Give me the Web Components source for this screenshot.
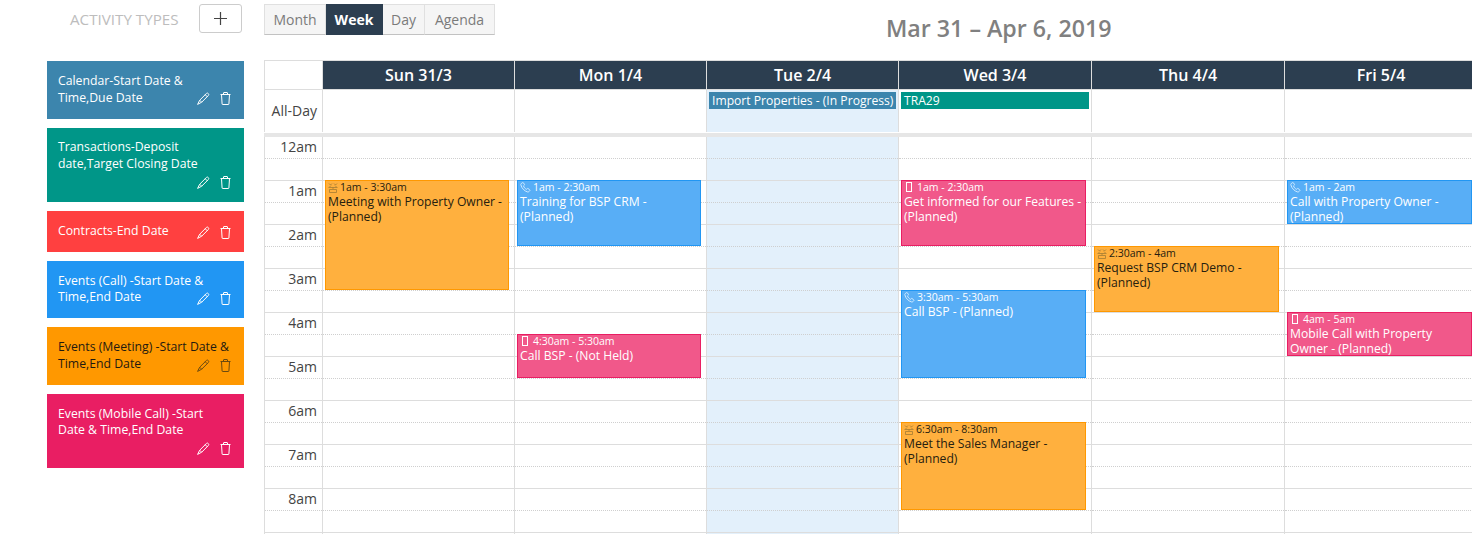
<!DOCTYPE html>
<html><head><meta charset="utf-8"><title>Calendar</title>
<style>
html,body{margin:0;padding:0;height:534px;width:1472px;overflow:hidden;background:#fff;font-family:"Open Sans",sans-serif}
crm-shell{width:1472px;height:534px}
</style></head><body>
<crm-shell>
  <activity-sidebar slot="side">
    <activity-card color="#3c85ad">Calendar-Start Date &amp; Time,Due Date</activity-card>
    <activity-card color="#009688">Transactions-Deposit date,Target Closing Date</activity-card>
    <activity-card color="#ff4040">Contracts-End Date</activity-card>
    <activity-card color="#2196f3">Events (Call) -Start Date &amp; Time,End Date</activity-card>
    <activity-card color="#ff9800" ink="#1f1a10" tool="#6b4a10">Events (Meeting) -Start Date &amp; Time,End Date</activity-card>
    <activity-card color="#e91e63" below>Events (Mobile Call) -Start Date &amp; Time,End Date</activity-card>
  </activity-sidebar>
  <cal-toolbar slot="top"></cal-toolbar>
  <week-calendar slot="main">
    <all-day-event slot="allday2" color="#3c85ad">Import Properties - (In Progress)</all-day-event>
    <all-day-event slot="allday3" color="#009688">TRA29</all-day-event>
    <cal-event slot="day0" kind="meeting" start="1" hours="2.5" time="1am - 3:30am">Meeting with Property Owner - (Planned)</cal-event>
    <cal-event slot="day1" kind="call" start="1" hours="1.5" time="1am - 2:30am">Training for BSP CRM - (Planned)</cal-event>
    <cal-event slot="day1" kind="mobile" start="4.5" hours="1" time="4:30am - 5:30am">Call BSP - (Not Held)</cal-event>
    <cal-event slot="day3" kind="mobile" start="1" hours="1.5" time="1am - 2:30am">Get informed for our Features - (Planned)</cal-event>
    <cal-event slot="day3" kind="call" start="3.5" hours="2" time="3:30am - 5:30am">Call BSP - (Planned)</cal-event>
    <cal-event slot="day3" kind="meeting" start="6.5" hours="2" time="6:30am - 8:30am">Meet the Sales Manager - (Planned)</cal-event>
    <cal-event slot="day4" kind="meeting" start="2.5" hours="1.5" time="2:30am - 4am">Request BSP CRM Demo - (Planned)</cal-event>
    <cal-event slot="day5" kind="call" start="1" hours="1" time="1am - 2am">Call with Property Owner - (Planned)</cal-event>
    <cal-event slot="day5" kind="mobile" start="4" hours="1" time="4am - 5am">Mobile Call with Property Owner - (Planned)</cal-event>
  </week-calendar>
</crm-shell>
<script>
const DAYS=[['Sun 31/3',192],['Mon 1/4',192],['Tue 2/4',192],['Wed 3/4',193],['Thu 4/4',193],['Fri 5/4',193]];
const COLS='59px '+DAYS.map(d=>d[1]+'px').join(' ');
const HOURS=['12am','1am','2am','3am','4am','5am','6am','7am','8am',''];
const LINE='#dddddd';

customElements.define('crm-shell',class extends HTMLElement{constructor(){super();this.attachShadow({mode:'open'}).innerHTML=`
<style>
:host{display:grid;grid-template-columns:264px 1fr;grid-template-rows:60px 1fr;overflow:hidden}
.side{grid-row:1/3;grid-column:1}
.top{grid-row:1;grid-column:2;min-width:0}
.main{grid-row:2;grid-column:2;min-width:0;overflow:hidden}
</style>
<div class="side"><slot name="side"></slot></div>
<div class="top"><slot name="top"></slot></div>
<div class="main"><slot name="main"></slot></div>`}});

customElements.define('activity-sidebar',class extends HTMLElement{constructor(){super();this.attachShadow({mode:'open'}).innerHTML=`
<style>
:host{display:block;padding-left:47px;width:197px}
.head{height:61px;box-sizing:border-box;display:flex;align-items:flex-start;padding-top:4px}
.title{margin-left:23px;width:129px;font-size:15.2px;line-height:30px;color:#bdbdbd;white-space:nowrap}
button{width:43px;height:29px;padding:0;background:#fff;border:1px solid #cccccc;border-radius:3px;display:flex;align-items:center;justify-content:center}
.list{display:flex;flex-direction:column;gap:9px}
svg{display:block}
</style>
<div class="head"><span class="title">ACTIVITY TYPES</span>
<button aria-label="Add"><svg width="13" height="13" viewBox="0 0 13 13"><path d="M6.5 0v13M0 6.5h13" stroke="#444" stroke-width="1.2"/></svg></button></div>
<div class="list"><slot></slot></div>`}});

customElements.define('activity-card',class extends HTMLElement{constructor(){super();
const c=this.getAttribute('color'),ink=this.getAttribute('ink')||'#fff',tool=this.getAttribute('tool')||ink,below=this.hasAttribute('below');
this.attachShadow({mode:'open'}).innerHTML=`
<style>
:host{display:block;background:${c};color:${ink};font-size:12.25px;line-height:16.8px;padding:11.8px 12px 12.2px 11px;width:174px;box-sizing:content-box}
.tools{float:right;${below?'clear:both;margin-top:16.8px;':''}display:flex;gap:10px;align-items:center;height:16.8px;padding:2px 1px 0 0;box-sizing:border-box;color:${tool}}
:host::after{content:"";display:block;clear:both}
svg{display:block;fill:none;stroke:currentColor;stroke-width:1}
</style>
<slot></slot><span class="tools">
<svg width="13" height="13" viewBox="0 0 13 13"><path d="M2.700 8.200 9.300 1.600c.7-.7 1.400-.7 2 0 .6.6.6 1.300 0 2L4.700 10.200.6 12.400ZM8.200 2.700l2.100 2.100M2.700 8.200l2 2"/></svg>
<svg width="11" height="13" viewBox="0 0 11 13"><path d="M.5 2.500h10M1.500 2.500l.6 9.500c0 .3.200.5.500.5h5.800c.3 0 .5-.2.5-.5l.6-9.500M3.500 2.500V1c0-.3.200-.5.500-.5h3c.3 0 .5.200.5.500v1.500"/></svg>
</span>`}});

customElements.define('cal-toolbar',class extends HTMLElement{constructor(){super();this.attachShadow({mode:'open'}).innerHTML=`
<style>
:host{display:flex;align-items:flex-start;height:60px;box-sizing:border-box;padding-top:4px;width:1208px}
.group{display:flex;flex:none}
.b{box-sizing:border-box;height:31px;font-size:14px;line-height:29px;text-align:center;color:#7b7b7b;background:#f5f5f5;border:1px solid #e0e0e0;border-bottom:1px solid #c2c2c2;border-left-width:0}
.b:first-child{border-left-width:1px}
.on{background:#2c3e50;color:#fff;font-weight:700;border-color:#2c3e50}
h2{margin:8px 0 0 391px;font-size:23.2px;line-height:32px;font-weight:600;color:#808080;white-space:nowrap}
</style>
<div class="group"><div class="b" style="width:62px">Month</div><div class="b on" style="width:57px">Week</div><div class="b" style="width:42px">Day</div><div class="b" style="width:70px">Agenda</div></div>
<h2>Mar 31 – Apr 6, 2019</h2>`}});

customElements.define('all-day-event',class extends HTMLElement{constructor(){super();
this.attachShadow({mode:'open'}).innerHTML=`
<style>:host{display:block;background:${this.getAttribute('color')};color:#fff;font-size:12.15px;line-height:17px;height:17px;padding:0 3px;white-space:nowrap;overflow:hidden}</style><slot></slot>`}});

const ICONS={
 call:'<svg width="11" height="11" viewBox="0 0 11 11" style="margin-right:-1px"><path d="M1.200 1.600 2.600.6c.3-.2.6-.1.8.2l1 1.600c.2.3.1.6-.1.8l-.8.7c.4 1.300 1.400 2.600 3 3.400l.8-.7c.3-.2.6-.2.8 0l1.600 1.200c.3.2.3.6.1.8l-1 1.100c-.3.3-.7.4-1.100.3C4.300 9 1.600 6.300.8 2.700c-.1-.4.1-.8.4-1.100Z" fill="none" stroke="currentColor" stroke-width=".9"/></svg>',
 mobile:'<svg width="6" height="10" viewBox="0 0 6 10" style="margin:0 2px 2px 2px"><rect x=".5" y=".5" width="5" height="9" fill="none" stroke="currentColor"/></svg>',
 meeting:'<svg width="10" height="10" viewBox="0 0 10 10" style="margin-right:-1px"><path d="M1 .5 2.500 2 4 .5M6 .5 7.500 2 9 .5M3 2.500 1.500 4M7 2.500 8.500 4M.5 4.500h9M5 4.500v1.500M1.500 6.500h7M1.500 6.500v3M8.500 6.500v3M1.500 9.500h7" fill="none" stroke="currentColor" stroke-width=".8"/></svg>'
};
const KIND={
 meeting:{bg:'#ffb03e',bd:'#ff9800',ink:'#26200f',ic:'#a57c34'},
 call:{bg:'#58aef6',bd:'#2196f3',ink:'#fff',ic:'#dcefff'},
 mobile:{bg:'#f1588a',bd:'#e91e63',ink:'#fff',ic:'#fff'}
};
customElements.define('cal-event',class extends HTMLElement{constructor(){super();
const s=+this.getAttribute('start'),h=+this.getAttribute('hours'),kind=this.getAttribute('kind'),k=KIND[kind];
this.attachShadow({mode:'open'}).innerHTML=`
<style>
:host{position:absolute;left:2px;width:calc(100% - 7px);top:${s*44-1}px;height:${h*44}px;box-sizing:border-box;background:${k.bg};border:1px solid ${k.bd};color:${k.ink};overflow:hidden;padding:0 2px;font-size:12.15px;line-height:15px}
.t{display:flex;align-items:center;gap:3px;font-size:10.5px;line-height:13px;height:13px}
.i{color:${k.ic};flex:none;display:block}
.i svg{display:block}
</style>
<div class="t"><span class="i">${ICONS[kind]}</span><span>${this.getAttribute('time')}</span></div>
<div><slot></slot></div>`}});

customElements.define('week-calendar',class extends HTMLElement{constructor(){super();
const head=DAYS.map(d=>`<div class="dh"><span>${d[0]}</span></div>`).join('');
const allday=DAYS.map((d,i)=>`<div class="ad${i==2?' today':''}"><slot name="allday${i}"></slot></div>`).join('');
const rows=HOURS.map(h=>`<div class="g"><span>${h}</span></div>`).join('');
const cells=DAYS.map((d,i)=>`<div class="day${i==2?' today':''}">${HOURS.map(()=>'<div class="hr"></div>').join('')}<slot name="day${i}"></slot></div>`).join('');
this.attachShadow({mode:'open'}).innerHTML=`
<style>
:host{display:block;width:1400px;height:474px;overflow:hidden;color:#444}
.row{display:grid;grid-template-columns:${COLS}}
.corner{box-sizing:border-box;height:30px;border:1px solid ${LINE}}
.dh{box-sizing:border-box;height:30px;background:#2c3e50;color:#fff;font-size:16px;font-weight:600;text-align:center;line-height:28px;border-top:1px solid ${LINE};border-right:1px solid ${LINE};border-bottom:1px solid ${LINE}}
.allrow{height:42px}
.gl{box-sizing:border-box;border-left:1px solid ${LINE};border-right:1px solid ${LINE};font-size:14px;line-height:42px;text-align:right;padding-right:5px;white-space:nowrap}
.ad{box-sizing:border-box;border-right:1px solid ${LINE};padding:2px 2px 0 2px}
.today{background:#e3f0fb}
.sep{height:4px;margin-top:1px;background:#e6e6e6}
.time{position:relative}
.g{box-sizing:border-box;height:44px;border-left:1px solid ${LINE};border-right:1px solid ${LINE};border-bottom:1px solid ${LINE};position:relative;text-align:right;padding-right:5px;font-size:14px;line-height:19px}
.g::after,.hr::after{content:"";position:absolute;left:0;right:0;top:21px;border-top:1px dotted #cfcfcf}
.day{box-sizing:border-box;border-right:1px solid ${LINE};position:relative}
.hr{box-sizing:border-box;height:44px;border-bottom:1px solid ${LINE};position:relative}
</style>
<div class="row"><div class="corner"></div>${head}</div>
<div class="row allrow"><div class="gl">All-Day</div>${allday}</div>
<div class="sep"></div>
<div class="row time"><div>${rows}</div>${cells}</div>`}});
</script>
</body></html>
